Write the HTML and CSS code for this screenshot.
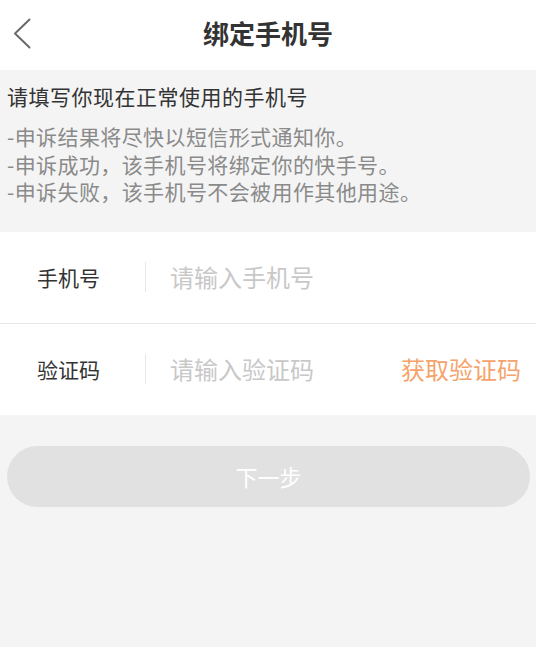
FILE: index.html
```html
<!DOCTYPE html>
<html lang="zh-CN">
<head>
<meta charset="utf-8">
<title>绑定手机号</title>
<link rel="stylesheet" href="styles.css">
</head>
<body>
<div class="page">
  <header class="topbar">
    <div class="back">
      <svg width="18" height="32" viewBox="0 0 18 32" aria-hidden="true">
        <polyline points="16.5,1.5 2,15.5 16.5,29.5" fill="none" stroke="#6a6a6a" stroke-width="2" stroke-linecap="round" stroke-linejoin="round"/>
      </svg>
    </div>
    <h1 class="title">绑定手机号</h1>
    <div class="spacer"></div>
  </header>

  <section class="notice">
    <p class="notice-head">请填写你现在正常使用的手机号</p>
    <ul class="notice-list">
      <li>-申诉结果将尽快以短信形式通知你。</li>
      <li>-申诉成功，该手机号将绑定你的快手号。</li>
      <li>-申诉失败，该手机号不会被用作其他用途。</li>
    </ul>
  </section>

  <section class="form">
    <div class="row">
      <span class="label">手机号</span>
      <span class="divider"></span>
      <span class="placeholder">请输入手机号</span>
    </div>
    <div class="row">
      <span class="label">验证码</span>
      <span class="divider"></span>
      <span class="placeholder">请输入验证码</span>
      <span class="get-code">获取验证码</span>
    </div>
  </section>

  <div class="actions">
    <button class="next" type="button">下一步</button>
  </div>
</div>
</body>
</html>
```

FILE: styles.css
```css
html, body {
  margin: 0;
  padding: 0;
  height: 100%;
}

body {
  background: #f4f4f4;
  font-family: "Noto Sans CJK SC", "Noto Sans", sans-serif;
  color: #333;
}

.page {
  min-height: 100%;
  display: flex;
  flex-direction: column;
}

.topbar {
  height: 70px;
  background: #fff;
  display: grid;
  grid-template-columns: 70px 1fr 70px;
  align-items: center;
}

.back {
  padding-left: 13px;
  display: flex;
  align-items: center;
  height: 100%;
  padding-bottom: 3px;
  box-sizing: border-box;
}

.back svg {
  display: block;
}

.title {
  margin: 0;
  text-align: center;
  font-size: 26px;
  font-weight: bold;
  line-height: 30px;
  color: #333;
  padding-bottom: 4px;
}

.notice {
  padding: 12px 7px 26px;
}

.notice-head {
  margin: 0;
  font-size: 21px;
  line-height: 28px;
  letter-spacing: 0.5px;
  color: #333;
}

.notice-list {
  list-style: none;
  margin: 13px 0 0;
  padding: 0;
  font-size: 21px;
  line-height: 27.5px;
  letter-spacing: 0.4px;
  color: #8a8a8a;
}

.form {
  background: #fff;
}

.row {
  height: 91px;
  display: flex;
  align-items: center;
  padding: 0 15px 0 37px;
}

.row + .row {
  border-top: 1px solid #e6e6e6;
}

.label {
  width: 64px;
  font-size: 21px;
  line-height: 28px;
  color: #333;
}

.divider {
  width: 1px;
  height: 30px;
  background: #e6e6e6;
  margin-left: 44px;
  margin-right: 24px;
}

.placeholder {
  flex: 1;
  font-size: 24px;
  line-height: 32px;
  color: #c8c8c8;
}

.get-code {
  font-size: 24px;
  line-height: 32px;
  color: #f6a36b;
}

.actions {
  padding: 31px 6px 0 7px;
}

.next {
  display: block;
  width: 100%;
  height: 61px;
  border: none;
  border-radius: 31px;
  background: #e1e1e1;
  color: #fff;
  font-family: "Noto Sans CJK SC", "Noto Sans", sans-serif;
  font-size: 22px;
  line-height: 30px;
  padding: 0;
}
```
